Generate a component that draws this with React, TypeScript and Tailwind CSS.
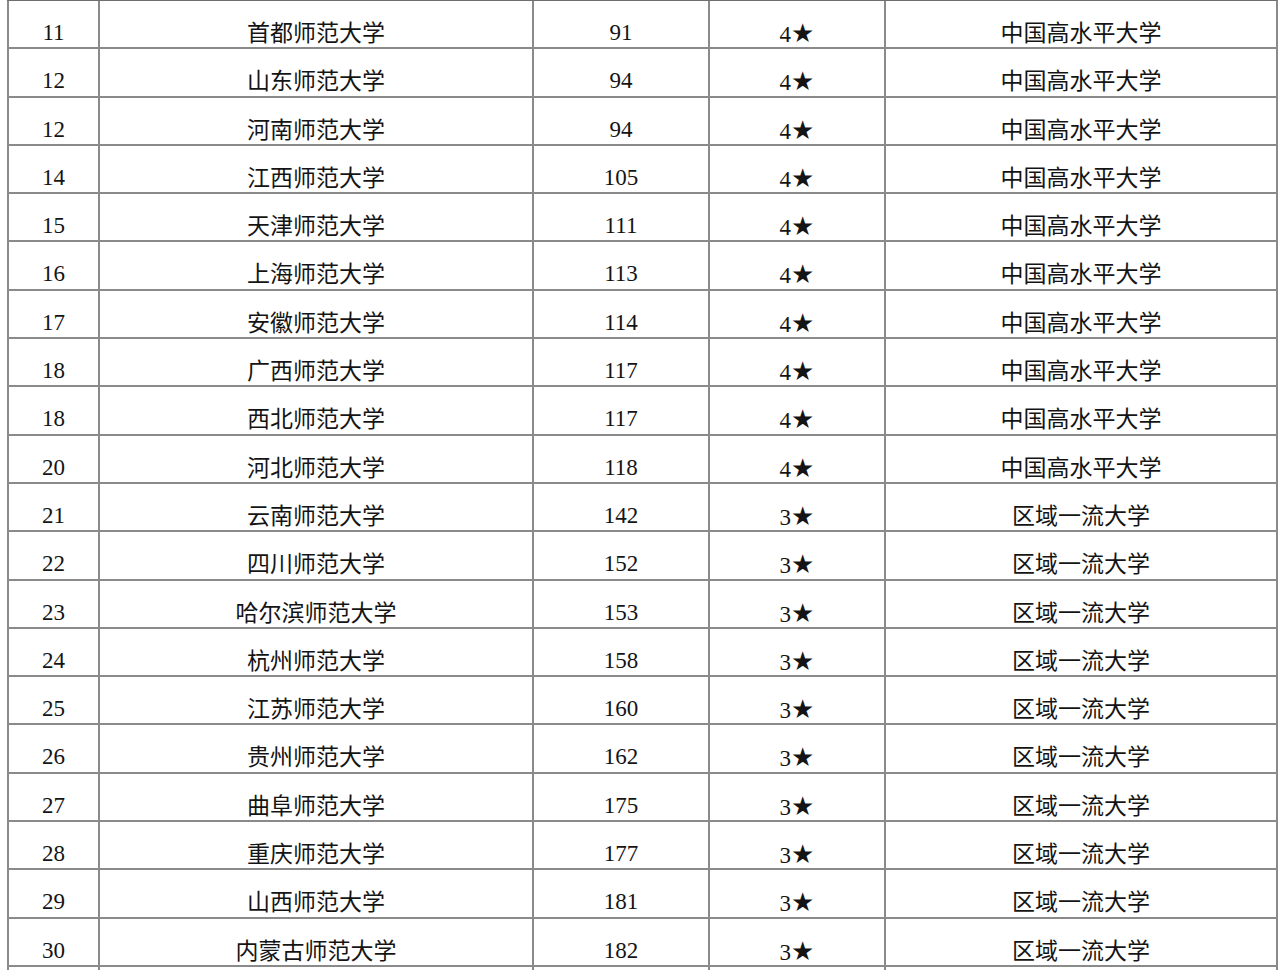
import React from "react";

type Row = { rank: string; name: string; score: string; star: string; level: string };

const A = "中国高水平大学";
const B = "区域一流大学";

const rows: Row[] = [
  { rank: "11", name: "首都师范大学", score: "91", star: "4", level: A },
  { rank: "12", name: "山东师范大学", score: "94", star: "4", level: A },
  { rank: "12", name: "河南师范大学", score: "94", star: "4", level: A },
  { rank: "14", name: "江西师范大学", score: "105", star: "4", level: A },
  { rank: "15", name: "天津师范大学", score: "111", star: "4", level: A },
  { rank: "16", name: "上海师范大学", score: "113", star: "4", level: A },
  { rank: "17", name: "安徽师范大学", score: "114", star: "4", level: A },
  { rank: "18", name: "广西师范大学", score: "117", star: "4", level: A },
  { rank: "18", name: "西北师范大学", score: "117", star: "4", level: A },
  { rank: "20", name: "河北师范大学", score: "118", star: "4", level: A },
  { rank: "21", name: "云南师范大学", score: "142", star: "3", level: B },
  { rank: "22", name: "四川师范大学", score: "152", star: "3", level: B },
  { rank: "23", name: "哈尔滨师范大学", score: "153", star: "3", level: B },
  { rank: "24", name: "杭州师范大学", score: "158", star: "3", level: B },
  { rank: "25", name: "江苏师范大学", score: "160", star: "3", level: B },
  { rank: "26", name: "贵州师范大学", score: "162", star: "3", level: B },
  { rank: "27", name: "曲阜师范大学", score: "175", star: "3", level: B },
  { rank: "28", name: "重庆师范大学", score: "177", star: "3", level: B },
  { rank: "29", name: "山西师范大学", score: "181", star: "3", level: B },
  { rank: "30", name: "内蒙古师范大学", score: "182", star: "3", level: B },
];

const serif = "font-['Liberation_Serif','Times_New_Roman',serif]";
const cjk = "font-['Noto_Sans_CJK_SC','Noto_Sans',sans-serif]";

const cell = "border-l-2 border-[#8a8a8a] text-center text-[#141414] overflow-hidden";

function NumCell({ children }: { children: React.ReactNode }) {
  return (
    <div className={`${cell} ${serif} text-[23px] leading-[22px] pt-[21px]`}>{children}</div>
  );
}

function CjkCell({ children }: { children: React.ReactNode }) {
  return (
    <div className={`${cell} ${cjk} text-[23px] leading-[23px] pt-[19px]`}>{children}</div>
  );
}

function StarCell({ n }: { n: string }) {
  return (
    <div className={`${cell} ${serif} text-[23px] leading-[22px] pt-[21px]`}>
      {n}
      <span className="font-['DejaVu_Sans',sans-serif] text-[26px] leading-[22px]">★</span>
    </div>
  );
}

const grid = "grid grid-cols-[91px_434px_176px_176px_392px] border-b-2 border-[#8a8a8a] h-[48.3px]";

export default function App() {
  return (
    <div className="w-[1280px] h-[970px] bg-white overflow-hidden">
      <div className="ml-[7px] w-[1271px] border-t border-t-[#6e6e6e] border-r-2 border-r-[#8a8a8a] flex flex-col">
        {rows.map((r, i) => (
          <div key={i} className={grid}>
            <NumCell>{r.rank}</NumCell>
            <CjkCell>{r.name}</CjkCell>
            <NumCell>{r.score}</NumCell>
            <StarCell n={r.star} />
            <CjkCell>{r.level}</CjkCell>
          </div>
        ))}
        <div className="grid grid-cols-[91px_434px_176px_176px_392px] h-[48.3px]">
          <div className={cell}></div>
          <div className={cell}></div>
          <div className={cell}></div>
          <div className={cell}></div>
          <div className={cell}></div>
        </div>
      </div>
    </div>
  );
}
